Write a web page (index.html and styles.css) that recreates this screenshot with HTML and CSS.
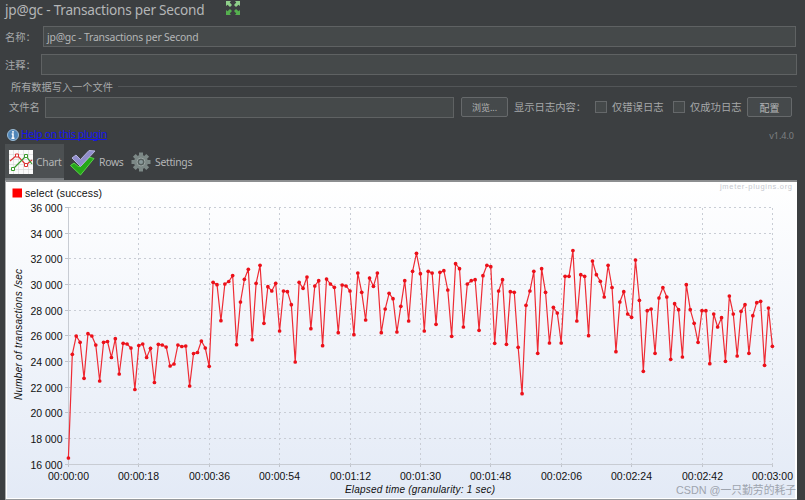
FILE: index.html
```html
<!DOCTYPE html>
<html lang="zh">
<head>
<meta charset="utf-8">
<title>Transactions per Second</title>
<link rel="stylesheet" href="styles.css">
</head>
<body>
<main class="panel">
  <header class="title-row">
    <h1 class="title">jp@gc - Transactions per Second</h1>
    <svg class="expand" viewBox="0 0 14 14">
      <path d="M0 0h5L3.700 1.500 6 4 4 6 1.500 3.700 0 5zM14 0v5l-1.500-1.300L10 6 8 4l2.300-2.500L9 0z" fill="#8fd08a"/>
      <path d="M0 14V9l1.500 1.300L4 8l2 2-2.300 2.500L5 14zM14 14H9l1.300-1.500L8 10l2-2 2.500 2.300L14 9z" fill="#55b04f"/>
    </svg>
  </header>
  <div class="row name-row"><label class="label">名称：</label><div class="input">jp@gc - Transactions per Second</div></div>
  <div class="row note-row"><label class="label">注释：</label><div class="input"></div></div>
  <div class="legend"><span>所有数据写入一个文件</span></div>
  <div class="row file-row">
    <label class="label file-label">文件名</label><div class="input file-input"></div>
    <button class="button browse">浏览...</button>
    <span class="label log-label">显示日志内容：</span>
    <span class="box"></span><span class="label errors">仅错误日志</span>
    <span class="box"></span><span class="label success">仅成功日志</span>
    <button class="button config">配置</button>
  </div>
  <div class="help-row">
    <svg class="info" viewBox="0 0 12 12"><circle cx="6" cy="6" r="5.5" fill="#4f86b9" stroke="#9bbbd4"/><path d="M6 2v1.700M4.700 5H6v4M4.500 9.200h3" stroke="#fff" stroke-width="1.500" fill="none"/></svg>
    <a class="help" href="#">Help on this plugin</a>
    <span class="version">v1.4.0</span>
  </div>
  <nav class="tabs">
    <div class="tab active">
      <svg class="chart-icon" viewBox="0 0 24 24">
        <path fill="#fafafa" d="M0 0h24v24H0z"/>
        <path d="M4.500 0v24M9.500 0v24M14.500 0v24M19.500 0v24M0 4.500h24M0 9.500h24M0 14.500h24M0 19.500h24" stroke="#d3d3d3" stroke-width=".6"/>
        <path d="M1 11L8 5l9 10 6-5" fill="none" stroke="#d33" stroke-width="1.200"/>
        <path d="M4 19L17 6l6 8" fill="none" stroke="#3a9a2c" stroke-width="1.200"/>
        <path d="M6.500 4h3v3h-3zM15.500 13.500h3v3h-3z" fill="#fff" stroke="#d33"/>
        <path d="M2.500 17.500h3v3h-3zM15.500 4.500h3v3h-3z" fill="#fff" stroke="#3a9a2c"/>
      </svg><span>Chart</span>
    </div>
    <div class="tab rows-tab">
      <svg class="check-icon" viewBox="0 0 27 27">
        <path d="M1.500 16.500l3.500-2.500 5 4L20 8l5 1.500L11.500 26z" fill="#25a718" stroke="#5bd14a"/>
        <path d="M3 9l4-3 4.500 4.500L20 1.500l6 .5L11.500 17.500z" fill="#908dcb" stroke="#b5b3e0"/>
      </svg><span>Rows</span>
    </div>
    <div class="tab settings-tab">
      <svg class="gear-icon" viewBox="-10 -10 20 20">
        <g stroke="#7d8987" stroke-width="4"><path d="M0-9.500V9.500M-9.500 0H9.500M-6.700-6.700L6.700 6.700M6.700-6.700L-6.700 6.700"/></g>
        <circle r="7" fill="#7b8785"/><circle r="4" fill="#56615f" stroke="#98a2a0"/><circle r="2" fill="#89999a"/>
      </svg><span>Settings</span>
    </div>
  </nav>
  <svg class="chart" id="chart" viewBox="5 180 793 320">
    <defs><linearGradient id="bg" x1="0" y1="0" x2="0" y2="1"><stop offset="0" stop-color="#fff"/><stop offset="1" stop-color="#e3eaf6"/></linearGradient></defs>
    <path fill="#fff" d="M5 180h792v320H5z"/>
    <path fill="#3c3f41" d="M797 180h1v320h-1z"/>
    <path fill="url(#bg)" d="M7 182h788v316H7z"/>
    <path d="M5 181H797" stroke="#8c8e90" stroke-width="2"/>
    <path d="M5.500 181V499" stroke="#a9abad"/>
    <path d="M5 499.500H797" stroke="#96999c"/>
    <path fill="#f00" d="M12.500 188.500h9.500v9H12.500z"/>
    <text class="chart-text" x="25" y="197" textLength="77">select (success)</text>
    <text class="site" x="720" y="189" textLength="72">jmeter-plugins.org</text>
    <g id="grid"></g>
    <path d="M68.500 208V464.500H773" fill="none" stroke="#c8ccd3"/>
    <g id="series"></g>
    <text class="axis-title" x="345" y="493" textLength="150">Elapsed time (granularity: 1 sec)</text>
    <text class="axis-title" transform="translate(22 400) rotate(-90)" textLength="131">Number of transactions /sec</text>
    <text class="watermark" x="676" y="494" textLength="120" lengthAdjust="spacingAndGlyphs">CSDN @一只勤劳的耗子</text>
  </svg>
</main>
<script src="chart.js"></script>
</body>
</html>
```
FILE: styles.css
```css
* { box-sizing: border-box; }
body { margin: 0; background: #3c3f41; color: #b4b6b7; font: 10.5px "Noto Sans", "Noto Sans CJK SC", sans-serif; }
.panel { width: 805px; height: 500px; overflow: hidden; padding-left: 5px; display: flex; flex-direction: column; }
.title-row { height: 26px; display: flex; align-items: flex-start; flex-shrink: 0; }
.title { margin: 0; width: 221px; font-size: 13.6px; letter-spacing: -.22px; line-height: 20px; font-weight: 400; white-space: nowrap; }
.expand { width: 14px; height: 14px; margin-top: 1px; }
.row { display: flex; align-items: center; flex-shrink: 0; }
.label { font-size: 10.3px; line-height: 15px; white-space: nowrap; color: #a6a8a9; }
.name-row { height: 21px; }
.name-row .label { width: 38px; padding-top: 1px; }
.note-row { height: 21px; margin-top: 7px; }
.note-row .label { width: 36px; padding-top: 1px; }
.input { flex: 1; height: 21px; margin-right: 8px; padding-left: 3px; border: 1px solid #5f6263; background: #45494a; line-height: 21px; font-size: 10.4px; letter-spacing: -.2px; white-space: nowrap; }
.name-row .input { margin-right: 9px; }
.legend { height: 20px; padding-left: 6px; margin-right: 8px; display: flex; align-items: center; gap: 5px; font-size: 10.2px; color: #a6a8a9; flex-shrink: 0; margin-top: 1px; }
.legend::after { content: ""; flex: 1; height: 1px; background: #535658; }
.file-row { height: 22px; }
.file-label { width: 36px; margin-left: 4px; }
.file-input { flex: none; width: 409px; margin-right: 7px; }
.button { height: 20px; padding: 0; border: 1px solid #66696b; border-radius: 2px; background: #45494b; color: #b4b6b7; font: 10px "Noto Sans", "Noto Sans CJK SC", sans-serif; }
.browse { width: 47px; margin-right: 6px; font-size: 9px; }
.log-label { width: 81px; }
.box { width: 12px; height: 12px; border: 1px solid #65686a; background: #45494a; margin-right: 5px; }
.errors { width: 61px; }
.success { width: 57px; }
.config { width: 45px; }
.help-row { display: flex; height: 26px; align-items: flex-end; padding-left: 2px; flex-shrink: 0; }
.info { width: 12px; height: 12px; margin-bottom: 3px; }
.help { margin: 0 0 1px 2px; color: #1414ee; font-size: 10.4px; letter-spacing: -.33px; line-height: 17px; text-decoration-skip-ink: none; }
.version { margin-left: auto; margin-right: 11px; margin-bottom: 1px; color: #7d8081; font-size: 9px; line-height: 15px; }
.tabs { display: flex; height: 36px; flex-shrink: 0; }
.tab { display: flex; align-items: center; font-size: 10.4px; letter-spacing: -.3px; }
.active { width: 59px; padding-left: 4px; padding-top: 2px; gap: 3px; background: #4c5052; border-bottom: 2px solid #75797c; }
.chart-icon { width: 24px; height: 24px; }
.rows-tab { padding-left: 5px; gap: 3px; width: 63px; }
.check-icon { width: 27px; height: 27px; }
.settings-tab { padding-left: 4px; gap: 4px; }
.gear-icon { width: 20px; height: 20px; }
.chart { width: 793px; height: 320px; flex-shrink: 0; }
.chart-text, .tick { font: 10.5px "Liberation Sans", sans-serif; fill: #111; }
.axis-title { font: italic 10px "Liberation Sans", sans-serif; fill: #111; }
.site { font: 7.5px "Liberation Sans", sans-serif; fill: #c6c9cf; }
.watermark { font: 11px "Liberation Sans", "Noto Sans CJK SC", sans-serif; fill: #9ea4ae; }
.grid-line { stroke: #c9cdd5; stroke-dasharray: 2 3; }
.line { fill: none; stroke: #ee2b34; stroke-width: 1.2; }
.dot { fill: #ec1019; }
```
FILE: chart.js
```js
const levels = [458,354.3,336,342.3,378.3,333.7,336,345,381,342.3,341.5,357.5,338.7,374,343.3,344,348,389.5,345.5,344,357.5,348.3,382.5,344.3,345,347,366,364,345,346.5,346,386,353.5,352.5,341,348,366.3,
282.3,284.7,320.7,284,281.5,275.5,344.7,302,279.3,269.3,339.7,283.3,265.3,323.3,286.7,291,283.3,331,291,291.7,304.7,362,282.3,288.3,277,328.7,286,280.7,345.7,279,284,287.3,332.7,285,286,291,334.7,273,292.3,320,278,286.3,273,332.7,
309,293.3,298.7,332,306.3,280.7,321,271.3,253.3,273.7,331,271.3,273,324.3,272.3,270.7,290,336.3,263.7,268.7,327,284,280.7,279.7,330.3,275.7,265.3,266.7,343.3,291,279.7,344.3,291.7,292.3,347.3,393.7,305.3,291,271.3,353.3,268.7,292.3,343,307.3,313,343,
276.3,276.3,250.5,321,274.7,276.3,335.7,261,274.7,281.3,297,265.3,287.5,351.7,302,291.7,314,317.3,260,300.3,371.3,310.7,309,353.3,298,287.5,297,359.3,303.7,309.7,357,284.7,309.7,323.3,342.3,310.7,310.7,363.7,314,327,317.7,361.3,296,314,356,311.3,304.7,353.3,315.7,302.7,301.3,365.3,308,346.3];
const ns = "http://www.w3.org/2000/svg";
function add(parent, name, attrs, text) {
  const el = document.createElementNS(ns, name);
  for (const key in attrs) el.setAttribute(key, attrs[key]);
  if (text) el.textContent = text;
  parent.appendChild(el);
}
const grid = document.getElementById("grid");
const series = document.getElementById("series");
for (let i = 0; i <= 10; i++) {
  const y = Math.round(207 + i * 25.68) + 0.5;
  const x = Math.round(68 + i * 70.4) + 0.5;
  if (i < 10) add(grid, "path", { class: "grid-line", d: `M69 ${y}H772` });
  if (i > 0) add(grid, "path", { class: "grid-line", d: `M${x} 208V464` });
  add(grid, "path", { stroke: "#c0c4cb", d: `M65 ${y}h4M${x} 464v3` });
  add(grid, "text", { class: "tick", x: 30.5, y: y + 4.5, textLength: 32 }, `${36 - i * 2} 000`);
  const sec = i * 18;
  const label = `00:0${Math.floor(sec / 60)}:${String(sec % 60).padStart(2, "0")}`;
  add(grid, "text", { class: "tick", x: x - 20.5, y: 479.5, textLength: 41 }, label);
}
const points = levels.map((y, i) => [68.4 + i * 3.911, y]);
add(series, "polyline", { class: "line", points: points.map(p => p.join(",")).join(" ") });
for (const [x, y] of points) add(series, "circle", { class: "dot", cx: x, cy: y, r: 1.85 });
```
